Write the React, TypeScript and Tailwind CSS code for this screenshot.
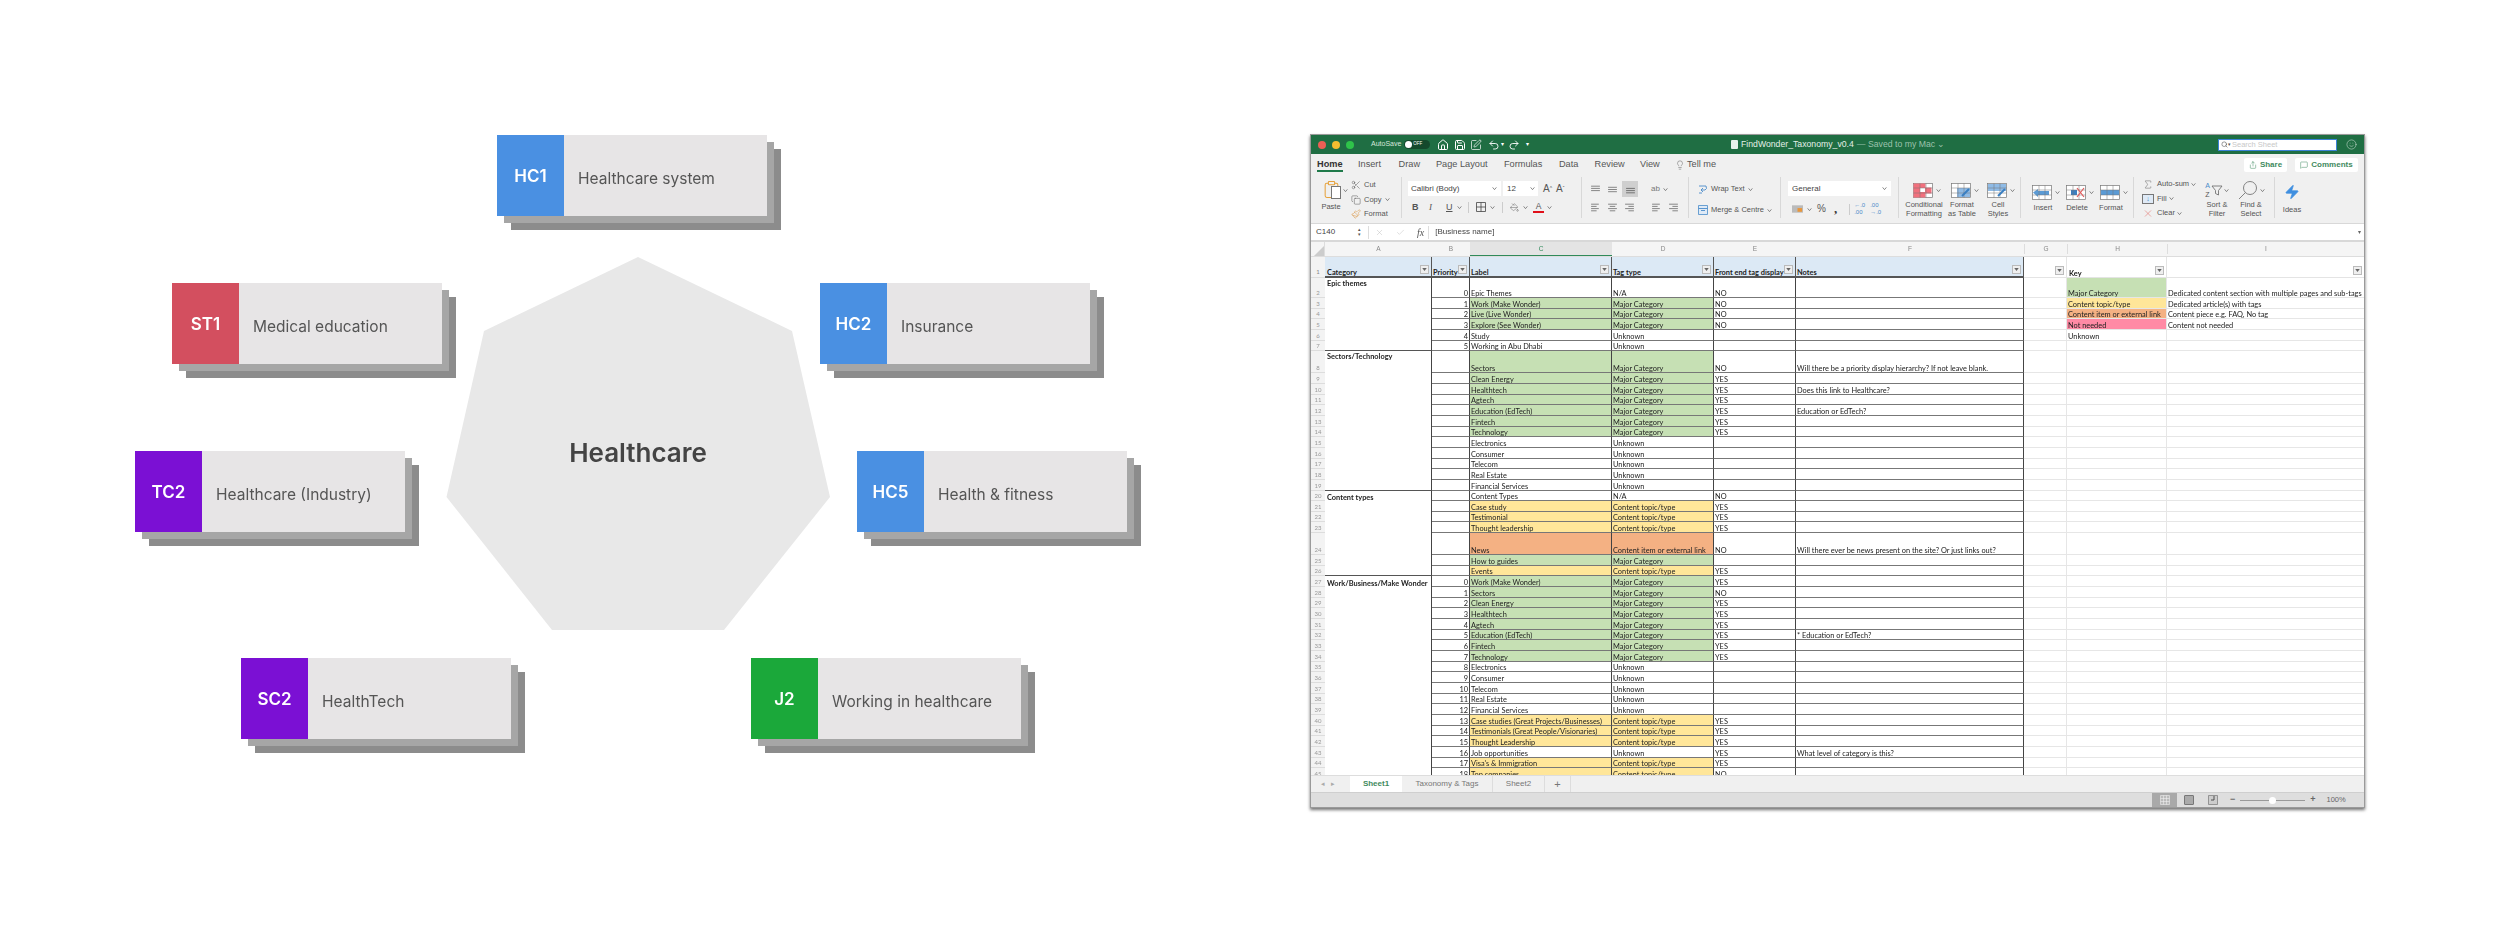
import {
  Check,
  Clipboard,
  Copy,
  House,
  Lightbulb,
  MessageSquare,
  Paintbrush,
  PaintBucket,
  Redo2,
  Save,
  Scissors,
  Search,
  Share,
  Sigma,
  Smile,
  SquarePen,
  Undo2,
  X,
  Zap,
} from 'lucide-react';

const cards = [
  { tag: 'HC1', label: 'Healthcare system', pos: 'left-[497px] top-[135px]', color: 'bg-[#4a90e2]' },
  { tag: 'ST1', label: 'Medical education', pos: 'left-[172px] top-[283px]', color: 'bg-[#d34f5f]' },
  { tag: 'HC2', label: 'Insurance', pos: 'left-[820px] top-[283px]', color: 'bg-[#4a90e2]' },
  { tag: 'TC2', label: 'Healthcare (Industry)', pos: 'left-[135px] top-[451px]', color: 'bg-[#7b10d4]' },
  { tag: 'HC5', label: 'Health & fitness', pos: 'left-[857px] top-[451px]', color: 'bg-[#4a90e2]' },
  { tag: 'SC2', label: 'HealthTech', pos: 'left-[241px] top-[658px]', color: 'bg-[#7b10d4]' },
  { tag: 'J2', label: 'Working in healthcare', pos: 'left-[751px] top-[658px]', color: 'bg-[#1ba83a]' },
];

const GREEN = 'bg-[#c6e0b4]';
const YELLOW = 'bg-[#ffe699]';
const ORANGE = 'bg-[#f4b183]';
const MC = 'Major Category';
const CT = 'Content topic/type';
const UN = 'Unknown';

type SheetRow = {
  n: number;
  a?: string;
  aTop?: boolean;
  aEnd?: boolean;
  b?: number;
  c: string;
  d: string;
  e?: string;
  f?: string;
  fill?: string;
  h?: string;
  hCol?: string;
  hFill?: string;
  iCol?: string;
};

const rows: SheetRow[] = [
  { n: 2, a: 'Epic themes', aTop: true, b: 0, c: 'Epic Themes', d: 'N/A', e: 'NO', h: 'h-[20px]', hCol: MC, hFill: GREEN, iCol: 'Dedicated content section with multiple pages and sub-tags' },
  { n: 3, b: 1, c: 'Work (Make Wonder)', d: MC, e: 'NO', fill: GREEN, hCol: CT, hFill: YELLOW, iCol: 'Dedicated article(s) with tags' },
  { n: 4, b: 2, c: 'Live (Live Wonder)', d: MC, e: 'NO', fill: GREEN, hCol: 'Content item or external link', hFill: ORANGE, iCol: 'Content piece e.g. FAQ, No tag' },
  { n: 5, b: 3, c: 'Explore (See Wonder)', d: MC, e: 'NO', fill: GREEN, hCol: 'Not needed', hFill: 'bg-[#ff8aa5]', iCol: 'Content not needed' },
  { n: 6, b: 4, c: 'Study', d: UN, hCol: UN },
  { n: 7, b: 5, c: 'Working in Abu Dhabi', d: UN, aEnd: true },
  { n: 8, a: 'Sectors/Technology', aTop: true, c: 'Sectors', d: MC, e: 'NO', f: 'Will there be a priority display hierarchy? If not leave blank.', fill: GREEN, h: 'h-[22px]' },
  { n: 9, c: 'Clean Energy', d: MC, e: 'YES', fill: GREEN },
  { n: 10, c: 'Healthtech', d: MC, e: 'YES', f: 'Does this link to Healthcare?', fill: GREEN },
  { n: 11, c: 'Agtech', d: MC, e: 'YES', fill: GREEN },
  { n: 12, c: 'Education (EdTech)', d: MC, e: 'YES', f: 'Education or EdTech?', fill: GREEN },
  { n: 13, c: 'Fintech', d: MC, e: 'YES', fill: GREEN },
  { n: 14, c: 'Technology', d: MC, e: 'YES', fill: GREEN },
  { n: 15, c: 'Electronics', d: UN },
  { n: 16, c: 'Consumer', d: UN },
  { n: 17, c: 'Telecom', d: UN },
  { n: 18, c: 'Real Estate', d: UN },
  { n: 19, c: 'Financial Services', d: UN, aEnd: true },
  { n: 20, a: 'Content types', c: 'Content Types', d: 'N/A', e: 'NO' },
  { n: 21, c: 'Case study', d: CT, e: 'YES', fill: YELLOW },
  { n: 22, c: 'Testimonial', d: CT, e: 'YES', fill: YELLOW },
  { n: 23, c: 'Thought leadership', d: CT, e: 'YES', fill: YELLOW },
  { n: 24, c: 'News', d: 'Content item or external link', e: 'NO', f: 'Will there ever be news present on the site? Or just links out?', fill: ORANGE, h: 'h-[22px]' },
  { n: 25, c: 'How to guides', d: MC, fill: GREEN },
  { n: 26, c: 'Events', d: CT, e: 'YES', fill: YELLOW, aEnd: true },
  { n: 27, a: 'Work/Business/Make Wonder', b: 0, c: 'Work (Make Wonder)', d: MC, e: 'YES', fill: GREEN },
  { n: 28, b: 1, c: 'Sectors', d: MC, e: 'NO', fill: GREEN },
  { n: 29, b: 2, c: 'Clean Energy', d: MC, e: 'YES', fill: GREEN },
  { n: 30, b: 3, c: 'Healthtech', d: MC, e: 'YES', fill: GREEN },
  { n: 31, b: 4, c: 'Agtech', d: MC, e: 'YES', fill: GREEN },
  { n: 32, b: 5, c: 'Education (EdTech)', d: MC, e: 'YES', f: '* Education or EdTech?', fill: GREEN },
  { n: 33, b: 6, c: 'Fintech', d: MC, e: 'YES', fill: GREEN },
  { n: 34, b: 7, c: 'Technology', d: MC, e: 'YES', fill: GREEN },
  { n: 35, b: 8, c: 'Electronics', d: UN },
  { n: 36, b: 9, c: 'Consumer', d: UN },
  { n: 37, b: 10, c: 'Telecom', d: UN },
  { n: 38, b: 11, c: 'Real Estate', d: UN },
  { n: 39, b: 12, c: 'Financial Services', d: UN },
  { n: 40, b: 13, c: 'Case studies (Great Projects/Businesses)', d: CT, e: 'YES', fill: YELLOW },
  { n: 41, b: 14, c: 'Testimonials (Great People/Visionaries)', d: CT, e: 'YES', fill: YELLOW },
  { n: 42, b: 15, c: 'Thought Leadership', d: CT, e: 'YES', fill: YELLOW },
  { n: 43, b: 16, c: 'Job opportunities', d: UN, e: 'YES', f: 'What level of category is this?' },
  { n: 44, b: 17, c: "Visa's & Immigration", d: CT, e: 'YES', fill: YELLOW },
  { n: 45, b: 18, c: 'Top companies', d: CT, e: 'NO', fill: YELLOW },
];

function Card({ tag, label, pos, color }: { tag: string; label: string; pos: string; color: string }) {
  return (
    <div className={`absolute ${pos} flex h-[81px] w-[270px] bg-[#e7e5e6] shadow-[7px_7px_0_#a6a6a6,14px_14px_0_#8c8c8c]`}>
      <div className={`flex w-[67px] shrink-0 items-center justify-center pt-[2px] text-[17px] font-semibold text-white ${color}`}>{tag}</div>
      <div className="flex items-center pl-[14px] pt-[7px] text-[15.5px] text-[#555]">{label}</div>
    </div>
  );
}

function Caret({ className = '' }: { className?: string }) {
  return (
    <svg viewBox="0 0 6 4" className={`h-[3px] w-[5px] shrink-0 ${className}`}>
      <path d="M0.5 0.5 L3 3.5 L5.5 0.5" fill="none" stroke="#666" strokeWidth="1" />
    </svg>
  );
}

function Lines({ align }: { align: 'l' | 'c' | 'r' }) {
  const ends = { l: [1, 8, 1, 6], c: [1, 9, 2.5, 7.5], r: [1, 9, 4, 9] }[align];
  return (
    <svg viewBox="0 0 10 8" className="h-[9px] w-[11px] shrink-0">
      <path d={`M${ends[0]} 1 H${ends[1]} M${ends[2]} 3 H${ends[3]} M${ends[0]} 5 H${ends[1]} M${ends[2]} 7 H${ends[3]}`} stroke="#777" strokeWidth="0.8" />
    </svg>
  );
}

// big ribbon buttons: drawn grid with a coloured part
function GridIcon({ kind }: { kind: 'cond' | 'table' | 'cell' | 'insert' | 'delete' | 'format' }) {
  return (
    <svg viewBox="0 0 20 15" className="h-[15px] w-[20px] shrink-0">
      <rect x="0.5" y="0.5" width="19" height="14" fill="#fff" stroke="#777" strokeWidth="0.7" />
      {kind === 'cond' && <path d="M0.5 0.5h12v4h6v6h-6v4h-12z" fill="#f1707d" />}
      {kind === 'cond' && <rect x="7" y="5" width="5" height="4" fill="#fff" />}
      {(kind === 'table' || kind === 'cell') && <rect x={kind === 'table' ? 6 : 1} y={kind === 'table' ? 5 : 1} width={kind === 'table' ? 13 : 18} height={kind === 'table' ? 9 : 7} fill="#8fbbe6" />}
      {kind === 'format' && <rect x="1" y="5" width="18" height="5" fill="#5b9bd5" />}
      {kind === 'insert' && <path d="M1 7.5 L6 4 V6 H17 V10 H6 V12 Z" fill="#5b9bd5" />}
      {kind === 'delete' && <rect x="5" y="5" width="6" height="5" fill="#3a7fc1" />}
      <path d="M0.5 5h19M0.5 10h19M7 0.5v14M13 0.5v14" stroke="#777" strokeWidth="0.5" fill="none" />
      {kind === 'delete' && <path d="M11 3 L18 12 M18 3 L11 12" stroke="#e05a5a" strokeWidth="1.2" />}
      {(kind === 'table' || kind === 'cell') && <path d="M18 6 L11 13" stroke="#3a7fc1" strokeWidth="2" />}
    </svg>
  );
}

function BigButton({ kind, lines, width }: { kind: 'cond' | 'table' | 'cell' | 'insert' | 'delete' | 'format'; lines: string[]; width: string }) {
  return (
    <div className={`flex shrink-0 flex-col items-center ${width}`}>
      <div className="flex h-[24px] items-center gap-[3px] pl-[6px]">
        <GridIcon kind={kind} />
        <Caret />
      </div>
      <div className="text-center text-[7.5px] leading-[8.5px] text-[#555]">
        {lines.map(l => (
          <div key={l} className="whitespace-nowrap">{l}</div>
        ))}
      </div>
    </div>
  );
}

function Ribbon() {
  return (
    <div className="flex h-[48px] shrink-0 bg-[#f0f0f0] pt-[2px] text-[#555]">
      {/* Clipboard */}
      <div className="flex h-[41px] w-[91px] shrink-0 border-r border-[#d8d8d8] pl-[9px]">
        <div className="flex w-[22px] flex-col items-center pt-[2px]">
          <div className="relative h-[21px] w-[19px]">
            <Clipboard className="h-[21px] w-[19px] text-[#e6a23c]" strokeWidth={1.3} />
            <div className="absolute bottom-[1px] right-0 h-[13px] w-[10px] border border-[#777] bg-white" />
          </div>
          <div className="mt-[2px] text-[7.5px] leading-[10px]">Paste</div>
        </div>
        <Caret className="ml-[1px] mt-[12px]" />
        <div className="ml-[3px] flex flex-col pt-[1px] text-[7.5px] leading-[14.5px]">
          <div className="flex items-center gap-[3px]"><Scissors className="h-[10px] w-[10px]" strokeWidth={1.2} />Cut</div>
          <div className="flex items-center gap-[3px]"><Copy className="h-[10px] w-[10px]" strokeWidth={1.2} />Copy<Caret /></div>
          <div className="flex items-center gap-[3px]"><Paintbrush className="h-[10px] w-[10px] text-[#d9903a]" strokeWidth={1.2} />Format</div>
        </div>
      </div>
      {/* Font */}
      <div className="flex h-[41px] w-[180px] shrink-0 flex-col border-r border-[#d8d8d8] pl-[6px] pt-[4px]">
        <div className="flex items-center">
          <div className="flex h-[15px] w-[93px] items-center justify-between bg-white pl-[3px] pr-[4px] text-[8px] text-[#444]">Calibri (Body)<Caret /></div>
          <div className="ml-[2px] flex h-[15px] w-[35px] items-center justify-between bg-white pl-[4px] pr-[3px] text-[8px] text-[#444]">12<Caret /></div>
          <div className="ml-[5px] text-[10px]">A<sup className="text-[5px]">^</sup></div>
          <div className="ml-[4px] text-[10px]">A<sup className="text-[5px]">ˇ</sup></div>
        </div>
        <div className="mt-[4px] flex items-center text-[9px] leading-[14px]">
          <span className="ml-[4px] w-[17px] font-bold">B</span>
          <span className="w-[17px] font-['Liberation_Serif',serif] italic">I</span>
          <span className="w-[11px] underline">U</span>
          <Caret />
          <div className="ml-[6px] mr-[7px] h-[11px] border-l border-[#ccc]" />
          <svg viewBox="0 0 10 10" className="h-[10px] w-[10px]"><path d="M0.5 0.5h9v9h-9zM5 0.5v9M0.5 5h9" fill="none" stroke="#444" strokeWidth="0.8" /></svg>
          <Caret className="ml-[4px]" />
          <div className="ml-[7px] mr-[7px] h-[11px] border-l border-[#ccc]" />
          <PaintBucket className="h-[9px] w-[9px]" strokeWidth={1.2} />
          <Caret className="ml-[4px]" />
          <div className="ml-[5px] flex w-[11px] flex-col items-center text-[8.5px] leading-[9px]">A<div className="h-[2px] w-[11px] bg-[#e0101a]" /></div>
          <Caret className="ml-[3px]" />
        </div>
      </div>
      {/* Alignment */}
      <div className="flex h-[41px] w-[107px] shrink-0 flex-col border-r border-[#d8d8d8] pl-[8px] pt-[4px]">
        <div className="flex h-[16px] items-center">
          <svg viewBox="0 0 10 8" className="h-[9px] w-[11px]"><path d="M1 1H9M1 3H9M1 5H9" stroke="#777" strokeWidth="0.8" /></svg>
          <svg viewBox="0 0 10 8" className="ml-[6px] h-[9px] w-[11px]"><path d="M1 2H9M1 4H9M1 6H9" stroke="#777" strokeWidth="0.8" /></svg>
          <div className="ml-[4px] flex h-[16px] w-[16px] items-center justify-center bg-[#cfcfcf]">
            <svg viewBox="0 0 10 8" className="h-[9px] w-[11px]"><path d="M1 3H9M1 5H9M1 7H9" stroke="#666" strokeWidth="0.8" /></svg>
          </div>
          <div className="ml-[13px] text-[8px] text-[#777]">ab</div>
          <Caret className="ml-[3px]" />
        </div>
        <div className="mt-[6px] flex items-center">
          <Lines align="l" />
          <div className="ml-[6px]"><Lines align="c" /></div>
          <div className="ml-[6px]"><Lines align="r" /></div>
          <div className="ml-[16px]"><Lines align="l" /></div>
          <div className="ml-[6px]"><Lines align="r" /></div>
        </div>
      </div>
      {/* Wrap */}
      <div className="flex h-[41px] w-[92px] shrink-0 flex-col border-r border-[#d8d8d8] pl-[9px] pt-[5px] text-[7.5px]">
        <div className="flex h-[14px] items-center gap-[3px]">
          <svg viewBox="0 0 10 10" className="h-[10px] w-[10px]"><path d="M1 2H8Q9.5 5 7 6H3M5 4L3 6L5 8M1 9H4" fill="none" stroke="#4a8bc9" strokeWidth="0.9" /></svg>
          Wrap Text<Caret />
        </div>
        <div className="mt-[7px] flex h-[14px] items-center gap-[3px]">
          <svg viewBox="0 0 10 10" className="h-[10px] w-[10px]"><path d="M0.5 0.5h9v9h-9z" fill="#dfeaf6" stroke="#4a8bc9" strokeWidth="0.8" /><path d="M0.5 3.5h9M3 5.5h4" stroke="#4a8bc9" strokeWidth="0.9" /></svg>
          Merge &amp; Centre<Caret />
        </div>
      </div>
      {/* Number */}
      <div className="flex h-[41px] w-[118px] shrink-0 flex-col border-r border-[#d8d8d8] pl-[7px] pt-[4px]">
        <div className="flex h-[15px] w-[103px] items-center justify-between bg-white pl-[4px] pr-[4px] text-[8px] text-[#444]">General<Caret /></div>
        <div className="mt-[6px] flex items-center">
          <svg viewBox="0 0 12 8" className="ml-[4px] h-[8px] w-[11px]"><rect width="12" height="8" fill="#bbb" /><rect x="6" y="3" width="5" height="4" fill="#e9963a" /></svg>
          <Caret className="ml-[4px]" />
          <span className="ml-[5px] text-[10px] leading-[12px]">%</span>
          <span className="ml-[8px] font-['Liberation_Serif',serif] text-[13px] font-bold leading-[10px] text-[#333]">,</span>
          <div className="ml-[12px] h-[11px] border-l border-[#ccc]" />
          <span className="ml-[4px] text-[6px] leading-[7px] text-[#4a8bc9]">←.0<br />.00</span>
          <span className="ml-[5px] text-[6px] leading-[7px] text-[#4a8bc9]">.00<br />→.0</span>
        </div>
      </div>
      {/* Styles */}
      <div className="flex h-[41px] w-[122px] shrink-0 border-r border-[#d8d8d8] pl-[6px] pt-[3px]">
        <BigButton kind="cond" lines={['Conditional', 'Formatting']} width="w-[38px]" />
        <BigButton kind="table" lines={['Format', 'as Table']} width="w-[38px]" />
        <BigButton kind="cell" lines={['Cell', 'Styles']} width="w-[34px]" />
      </div>
      {/* Cells */}
      <div className="flex h-[41px] w-[113px] shrink-0 border-r border-[#d8d8d8] pl-[5px] pt-[3px]">
        <BigButton kind="insert" lines={['Insert']} width="w-[34px]" />
        <BigButton kind="delete" lines={['Delete']} width="w-[34px]" />
        <BigButton kind="format" lines={['Format']} width="w-[34px]" />
      </div>
      {/* Editing */}
      <div className="flex h-[41px] w-[141px] shrink-0 border-r border-[#d8d8d8] pl-[8px] text-[7.5px]">
        <div className="flex w-[58px] shrink-0 flex-col leading-[14.5px]">
          <div className="flex items-center gap-[2px]"><Sigma className="h-[11px] w-[12px]" strokeWidth={1} /><span className="ml-[1px]">Auto-sum</span><Caret /></div>
          <div className="flex items-center gap-[2px]">
            <div className="flex h-[10px] w-[12px] items-center justify-center border border-[#777] bg-[#dfeaf6] text-[7px] leading-none text-[#3a7fc1]">↓</div>
            <span className="ml-[1px]">Fill</span><Caret />
          </div>
          <div className="flex items-center gap-[2px]"><X className="h-[11px] w-[12px] text-[#e0605a]" strokeWidth={1.1} /><span className="ml-[1px]">Clear</span><Caret /></div>
        </div>
        <div className="flex w-[34px] shrink-0 flex-col items-center pt-[2px]">
          <div className="flex h-[22px] items-center gap-[1px]">
            <div className="text-[7px] leading-[9px]"><div className="text-[#4a8bc9]">A</div><div>Z</div></div>
            <svg viewBox="0 0 12 12" className="h-[12px] w-[12px]"><path d="M1 2H11L7.5 6.5V11L4.5 9.5V6.5Z" fill="none" stroke="#666" strokeWidth="0.8" /></svg>
            <Caret />
          </div>
          <div className="text-center leading-[8.5px]">Sort &amp;<br />Filter</div>
        </div>
        <div className="flex w-[34px] shrink-0 flex-col items-center pt-[2px]">
          <div className="flex h-[22px] items-center gap-[2px]">
            <svg viewBox="0 0 20 20" className="h-[20px] w-[20px]"><circle cx="12" cy="8" r="6.5" fill="none" stroke="#777" strokeWidth="0.9" /><path d="M7.5 12.5 L1 19" stroke="#777" strokeWidth="0.9" /></svg>
            <Caret />
          </div>
          <div className="text-center leading-[8.5px]">Find &amp;<br />Select</div>
        </div>
      </div>
      {/* Ideas */}
      <div className="flex w-[34px] flex-col items-center pt-[3px] text-[7.5px]">
        <div className="flex h-[24px] items-center"><Zap className="h-[22px] w-[16px] fill-[#3f8fe0] text-[#3f8fe0]" strokeWidth={1} /></div>
        Ideas
      </div>
    </div>
  );
}

function FilterBtn() {
  return (
    <div className="mb-[2px] mr-[2px] flex h-[9px] w-[9px] shrink-0 items-center justify-center border border-[#bbb] bg-[#efefef]">
      <svg viewBox="0 0 6 4" className="h-[3px] w-[5px]"><path d="M0 0H6L3 4Z" fill="#666" /></svg>
    </div>
  );
}

function Cell({ className, children }: { className: string; children?: React.ReactNode }) {
  return <div className={`flex shrink-0 items-end overflow-x-clip whitespace-nowrap pl-[1px] leading-[7px] ${className}`}>{children}</div>;
}

function HeaderRow() {
  const head = 'h-full justify-between border-r border-b-2 border-[#555] bg-[#dce9f5] font-bold';
  return (
    <div className="flex h-[21px] shrink-0">
      <div className="flex w-[14px] shrink-0 items-end justify-center border-b border-[#ddd] bg-[#f3f3f3] pb-[1px] text-[6px] leading-[8px] text-[#888]">1</div>
      <Cell className={`w-[107px] ${head}`}><span className="ml-[1px]">Category</span><FilterBtn /></Cell>
      <Cell className={`w-[38px] ${head}`}><span>Priority</span><FilterBtn /></Cell>
      <Cell className={`w-[142px] ${head}`}><span>Label</span><FilterBtn /></Cell>
      <Cell className={`w-[102px] ${head}`}><span>Tag type</span><FilterBtn /></Cell>
      <Cell className={`w-[82px] ${head}`}><span>Front end tag display</span><FilterBtn /></Cell>
      <Cell className={`w-[228px] ${head}`}><span>Notes</span><FilterBtn /></Cell>
      <Cell className="w-[43px] justify-end border-r border-b border-[#e4e4e4]"><FilterBtn /></Cell>
      <Cell className="w-[100px] justify-between border-r border-b border-[#e4e4e4] font-bold"><span className="ml-[1px]">Key</span><FilterBtn /></Cell>
      <Cell className="w-[197px] justify-end border-b border-[#e4e4e4]"><FilterBtn /></Cell>
    </div>
  );
}

function DataRow({ r }: { r: SheetRow }) {
  const dark = 'border-r border-b border-r-[#444] border-b-[#777]';
  const light = 'border-r border-b border-[#e6e6e6]';
  return (
    <div className={`flex shrink-0 ${r.h ?? 'h-[10.67px]'}`}>
      <div className="flex w-[14px] shrink-0 items-end justify-center border-b border-[#ddd] bg-[#f3f3f3] text-[6px] leading-[8px] text-[#999]">{r.n}</div>
      <Cell className={`w-[107px] border-r border-r-[#444] pl-[2px] font-bold ${r.aTop ? 'items-start pt-[2px]' : ''} ${r.aEnd ? 'border-b border-b-[#555]' : ''}`}>{r.a}</Cell>
      <Cell className={`w-[38px] justify-end pr-[1px] ${dark}`}>{r.b}</Cell>
      <Cell className={`w-[142px] ${dark} ${r.fill ?? ''}`}>{r.c}</Cell>
      <Cell className={`w-[102px] ${dark} ${r.fill ?? ''}`}>{r.d}</Cell>
      <Cell className={`w-[82px] ${dark}`}>{r.e}</Cell>
      <Cell className={`w-[228px] ${dark}`}>{r.f}</Cell>
      <Cell className={`w-[43px] ${light}`} />
      <Cell className={`w-[100px] ${light} ${r.hFill ?? ''}`}>{r.hCol}</Cell>
      <Cell className="w-[197px] border-b border-[#e6e6e6]">{r.iCol}</Cell>
    </div>
  );
}

function ExcelWindow() {
  return (
    <div className="mt-[134px] flex h-[674px] w-[1055px] shrink-0 flex-col overflow-hidden border border-[#9a9a9a] bg-white font-['Liberation_Sans',sans-serif] shadow-[0_2px_3px_rgba(0,0,0,0.55)] blur-[0.5px]">
      {/* Title bar */}
      <div className="flex h-[19px] shrink-0 items-center bg-[#1f6e43] text-white">
        <div className="flex w-[419px] shrink-0 items-center">
          <div className="ml-[7px] h-[8px] w-[8px] rounded-full bg-[#ec5f55]" />
          <div className="ml-[6px] h-[8px] w-[8px] rounded-full bg-[#f5bd30]" />
          <div className="ml-[6px] h-[8px] w-[8px] rounded-full bg-[#2fc44a]" />
          <span className="ml-[17px] text-[7px] text-[#d7e6dc]">AutoSave</span>
          <div className="ml-[3px] flex h-[9px] w-[26px] items-center rounded-full bg-[#14492c] pl-[1px]">
            <div className="h-[7px] w-[7px] rounded-full bg-white" />
            <span className="ml-[1px] text-[4.5px]">OFF</span>
          </div>
          <House className="ml-[7px] h-[12px] w-[12px]" strokeWidth={2} />
          <Save className="ml-[5px] h-[12px] w-[12px]" strokeWidth={2} />
          <SquarePen className="ml-[4px] h-[12px] w-[12px]" strokeWidth={1.4} />
          <Undo2 className="ml-[6px] h-[12px] w-[12px]" strokeWidth={1.8} />
          <span className="ml-[1px] text-[6px]">▾</span>
          <Redo2 className="ml-[4px] h-[12px] w-[12px]" strokeWidth={1.8} />
          <span className="ml-[6px] text-[6px]">▾</span>
        </div>
        <div className="flex w-[488px] shrink-0 items-center">
          <div className="ml-[1px] h-[9px] w-[7px] rounded-[1px] bg-[#e8f2ec]" />
          <span className="ml-[3px] text-[8.7px] text-[#e4eee8]">FindWonder_Taxonomy_v0.4</span>
          <span className="ml-[3px] text-[8.7px] text-[#9cc2ac]">— Saved to my Mac ⌄</span>
        </div>
        <div className="flex h-[12px] w-[119px] shrink-0 items-center border border-[#3b82d6] bg-white pl-[2px] text-[7.5px] text-[#c8c8c8]">
          <Search className="h-[7px] w-[7px] text-[#555]" strokeWidth={2} />
          <span className="mr-[1px] text-[5px] text-[#555]">▾</span>Search Sheet
        </div>
        <Smile className="ml-[9px] h-[11px] w-[11px] text-[#cfe2d6]" strokeWidth={1.2} />
      </div>
      {/* Tabs */}
      <div className="flex h-[21px] shrink-0 items-center bg-[#f0f0f0] pl-[6px] text-[9.2px] text-[#555]">
        <div className="w-[41px] shrink-0">
          <span className="relative font-bold text-[#333]">
            Home
            <span className="absolute -bottom-[3px] left-0 h-[2px] w-full bg-[#1f7a4a]" />
          </span>
        </div>
        <span className="w-[40.6px] shrink-0">Insert</span>
        <span className="w-[37.4px] shrink-0">Draw</span>
        <span className="w-[68px] shrink-0">Page Layout</span>
        <span className="w-[55px] shrink-0">Formulas</span>
        <span className="w-[35.6px] shrink-0">Data</span>
        <span className="w-[45.4px] shrink-0">Review</span>
        <span className="w-[35px] shrink-0">View</span>
        <Lightbulb className="h-[10px] w-[10px] shrink-0" strokeWidth={1.1} />
        <span className="ml-[2px]">Tell me</span>
        <div className="ml-auto mr-[5px] flex h-[14px] w-[43px] items-center justify-center gap-[3px] rounded-[2px] bg-white text-[8px] font-bold text-[#3f8a60]">
          <Share className="h-[8px] w-[8px]" strokeWidth={1.5} />Share
        </div>
        <div className="mr-[6px] ml-[3px] flex h-[14px] w-[63px] items-center justify-center gap-[3px] rounded-[2px] bg-white text-[8px] font-bold text-[#3f8a60]">
          <MessageSquare className="h-[8px] w-[8px]" strokeWidth={1.5} />Comments
        </div>
      </div>
      <Ribbon />
      {/* Formula bar */}
      <div className="flex h-[19px] shrink-0 items-center border-b-2 border-t border-[#d8d8d8] bg-white text-[8px] text-[#444]">
        <span className="ml-[5px] w-[42px]">C140</span>
        <span className="w-[8px] text-[5px] leading-[5px] text-[#555]">▴<br />▾</span>
        <div className="ml-[2px] h-[13px] border-l border-[#ddd]" />
        <X className="ml-[6px] h-[9px] w-[9px] text-[#bbb]" strokeWidth={1.2} />
        <Check className="ml-[12px] h-[9px] w-[9px] text-[#bbb]" strokeWidth={1.2} />
        <span className="ml-[12px] font-['Liberation_Serif',serif] text-[10px] italic text-[#555]">fx</span>
        <div className="ml-[4px] h-[13px] border-l border-[#ddd]" />
        <span className="ml-[6px]">[Business name]</span>
        <span className="ml-auto mr-[3px] text-[6px] text-[#666]">▾</span>
      </div>
      {/* Column letters */}
      <div className="flex h-[15px] shrink-0 items-center border-b border-[#ddd] bg-[#f5f5f5] text-center text-[6.5px] text-[#888]">
        <div className="flex h-full w-[14px] shrink-0 items-end justify-end border-r border-[#ddd]"><div className="h-0 w-0 border-b-[10px] border-l-[10px] border-b-[#ccc] border-l-transparent" /></div>
        <div className="w-[107px] shrink-0">A</div>
        <div className="w-[38px] shrink-0">B</div>
        <div className="flex h-full w-[142px] shrink-0 items-center justify-center border-b border-[#2f8a5a] bg-[#e4e4e4] text-[#2f8a5a]">C</div>
        <div className="w-[102px] shrink-0">D</div>
        <div className="w-[82px] shrink-0">E</div>
        <div className="w-[228px] shrink-0">F</div>
        <div className="w-[43px] shrink-0 border-l border-[#ddd]">G</div>
        <div className="w-[100px] shrink-0 border-l border-[#ddd]">H</div>
        <div className="w-[197px] shrink-0 border-l border-[#ddd]">I</div>
      </div>
      {/* Cells */}
      <div className="h-[518px] shrink-0 overflow-hidden font-['Lato',sans-serif] text-[7.4px] text-[#222]">
        <HeaderRow />
        {rows.map(r => (
          <DataRow key={r.n} r={r} />
        ))}
      </div>
      {/* Sheet tabs */}
      <div className="flex h-[17px] shrink-0 items-stretch border-t border-[#ddd] bg-[#f0f0f0] text-[8px] text-[#777]">
        <div className="flex w-[39px] items-center gap-[6px] pl-[10px] text-[7px] text-[#aaa]"><span>◂</span><span>▸</span></div>
        <div className="flex w-[52px] items-center justify-center bg-white font-bold text-[#3f8a60]">Sheet1</div>
        <div className="flex w-[91px] items-center justify-center border-r border-[#ddd]">Taxonomy &amp; Tags</div>
        <div className="flex w-[52px] items-center justify-center border-r border-[#ddd]">Sheet2</div>
        <div className="flex w-[26px] items-center justify-center border-r border-[#ddd] text-[11px]">+</div>
      </div>
      {/* Status bar */}
      <div className="flex flex-1 items-stretch border-t border-[#cfcfcf] bg-[#dedede] text-[#666]">
        <div className="ml-[841px] flex w-[25px] items-center justify-center bg-[#a9a9a9]">
          <svg viewBox="0 0 10 10" className="h-[10px] w-[10px]"><path d="M0.5 0.5h9v9h-9zM3.5 0.5v9M6.5 0.5v9M0.5 3.5h9M0.5 6.5h9" fill="#bbb" stroke="#eee" strokeWidth="0.6" /></svg>
        </div>
        <div className="flex w-[24px] items-center justify-center">
          <div className="h-[10px] w-[10px] rounded-[1px] border border-[#777] bg-[#aaa]" />
        </div>
        <div className="flex w-[24px] items-center justify-center">
          <svg viewBox="0 0 10 10" className="h-[10px] w-[10px]"><path d="M0.5 0.5h9v9h-9z" fill="#ccc" stroke="#777" strokeWidth="0.7" /><path d="M6 1v4H3" fill="none" stroke="#444" strokeWidth="0.9" /></svg>
        </div>
        <div className="ml-[5px] flex items-center">
          <span className="text-[9px] font-bold">−</span>
          <div className="relative ml-[5px] h-[1px] w-[65px] bg-[#999]">
            <div className="absolute -top-[3px] left-[29px] h-[7px] w-[7px] rounded-full bg-white" />
          </div>
          <span className="ml-[5px] text-[9px] font-bold">+</span>
          <span className="ml-[11px] text-[7.5px]">100%</span>
        </div>
      </div>
    </div>
  );
}

export default function App() {
  return (
    <div className="flex h-[945px] w-[2500px] overflow-hidden bg-white font-['Inter',sans-serif]">
      {/* Diagram canvas */}
      <div className="relative h-full w-[1310px] shrink-0 blur-[0.4px]">
        <svg viewBox="0 0 1310 945" className="absolute inset-0 h-full w-full">
          <polygon points="638,257 792,331 830,497 724,630 552,630 446.5,497 484,331" fill="#e8e8e8" />
        </svg>
        <div className="absolute left-[446px] top-[430px] flex h-[44px] w-[384px] items-center justify-center text-[26px] font-semibold text-[#444]">Healthcare</div>
        {cards.map(c => (
          <Card key={c.tag} {...c} />
        ))}
      </div>
      <ExcelWindow />
    </div>
  );
}
